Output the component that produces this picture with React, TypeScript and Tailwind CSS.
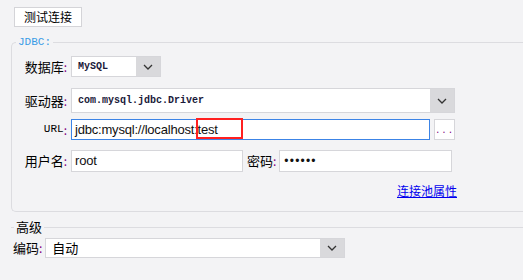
import React from "react";

const cjk = "font-['Noto_Sans_CJK_SC','Noto_Sans',sans-serif]";
const mono = "font-['Liberation_Mono','DejaVu_Sans_Mono',monospace]";
const sans = "font-['Liberation_Sans',Arial,sans-serif]";

function Chevron() {
  return (
    <svg width="10" height="6" viewBox="0 0 10 6" className="text-[#333]">
      <polyline points="1,1 5,5 9,1" fill="none" stroke="currentColor" strokeWidth="1.3" />
    </svg>
  );
}

function Label({ text, mono: isMono }: { text: string; mono?: boolean }) {
  return (
    <div className="w-[56px] shrink-0 flex justify-end items-center pr-[1px]">
      <span className={isMono ? `${mono} text-[11px] text-black` : `${cjk} text-[13px] text-black`}>{text}</span>
      <span className={`${cjk} text-[12px] text-[#800080]`}>:</span>
    </div>
  );
}

function Select({ value, width, height, monoText }: { value: string; width: string; height: string; monoText?: boolean }) {
  return (
    <div className={`flex ${width} ${height} border border-[#d6d6da] bg-white`}>
      <div
        className={`flex-1 flex items-center pl-[6px] ${
          monoText ? `${mono} text-[10px] font-semibold text-[#1a1a3a]` : `${cjk} text-[13px] text-black`
        }`}
      >
        {value}
      </div>
      <div className="w-[24px] bg-[#d9d9dc] flex items-center justify-center">
        <Chevron />
      </div>
    </div>
  );
}

export default function App() {
  return (
    <div className="w-[523px] h-[280px] bg-[#f3f3f5] overflow-hidden flex flex-col">
      <button className={`mt-[7px] ml-[14px] w-[68px] h-[20px] border border-[#d4d4d8] bg-white ${cjk} text-[12px] text-black leading-none`}>
        测试连接
      </button>

      {/* JDBC group */}
      <div className="relative mt-[15px] ml-[11px] w-[530px] h-[170px] border-l border-t border-b border-[#dcdce0] rounded-l-[5px] flex flex-col pt-[13px]">
        <span className={`absolute -top-[8px] left-[4px] px-[2px] bg-[#f3f3f5] ${mono} text-[11px] leading-[14px] text-[#3a9be6]`}>
          JDBC:
        </span>

        <div className="flex items-center h-[21px] gap-[3px]">
          <Label text="数据库" />
          <Select value="MySQL" width="w-[90px]" height="h-[21px]" monoText />
        </div>

        <div className="flex items-center h-[25px] mt-[11px] gap-[3px]">
          <Label text="驱动器" />
          <Select value="com.mysql.jdbc.Driver" width="w-[384px]" height="h-[25px]" monoText />
        </div>

        <div className="flex items-center h-[21px] mt-[6px] gap-[3px]">
          <Label text="URL" mono />
          <div className="relative w-[359px] h-[21px] border border-[#3c84e6] bg-white flex items-center pl-[3px]">
            <span className={`${sans} text-[13px] tracking-[-0.2px] text-[#111]`}>jdbc:mysql://localhost:test</span>
            <div className="absolute left-[124px] top-[-2px] w-[47px] h-[21px] border-[2px] border-[#ff2020]" />
          </div>
          <div className="ml-[1px] w-[21px] h-[21px] border border-[#d6d6da] bg-white flex items-end justify-center pb-[3px]">
            <span className={`${mono} text-[9px] leading-none tracking-[1px] text-[#800080]`}>...</span>
          </div>
        </div>

        <div className="flex items-center h-[22px] mt-[10px]">
          <div className="flex items-center gap-[3px]">
            <Label text="用户名" />
            <div className={`w-[172px] h-[22px] border border-[#d6d6da] bg-white flex items-center pl-[3px] ${sans} text-[13px] tracking-[-0.2px] text-[#111]`}>
              root
            </div>
          </div>
          <div className="flex items-center ml-[4px] gap-[3px]">
            <div className="flex items-center">
              <span className={`${cjk} text-[13px] text-black`}>密码</span>
              <span className={`${cjk} text-[12px] text-[#800080]`}>:</span>
            </div>
            <div className={`w-[173px] h-[22px] border border-[#d6d6da] bg-white flex items-center pl-[4px] ${sans} text-[12px] tracking-[1.2px] text-[#111]`}>
              ••••••
            </div>
          </div>
        </div>

        <div className="w-[445px] flex justify-end mt-[11px]">
          <span className={`${cjk} text-[12px] leading-[16px] text-[#0000ee] underline`}>连接池属性</span>
        </div>
      </div>

      {/* 高级 */}
      <div className="relative mt-[15px] ml-[11px] w-[520px] border-t border-[#dcdce0]">
        <span className={`absolute -top-[10px] left-[3px] px-[2px] bg-[#f3f3f5] ${cjk} text-[13px] leading-[18px] text-black`}>
          高级
        </span>
      </div>

      <div className="flex items-center mt-[10px] ml-[13px] gap-[3px]">
        <div className="flex items-center">
          <span className={`${cjk} text-[13px] text-black`}>编码</span>
          <span className={`${cjk} text-[12px] text-[#800080]`}>:</span>
        </div>
        <Select value="自动" width="w-[300px]" height="h-[20px]" />
      </div>
    </div>
  );
}
